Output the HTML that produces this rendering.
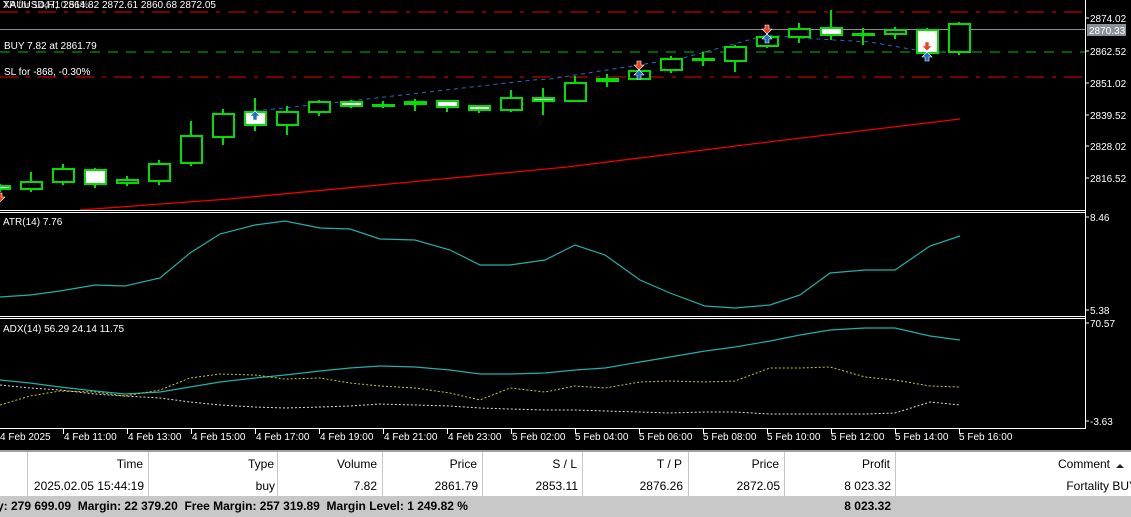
<!DOCTYPE html>
<html><head><meta charset="utf-8"><style>
html,body{margin:0;padding:0;background:#000;width:1131px;height:517px;overflow:hidden;font-family:"Liberation Sans",sans-serif}
svg{position:absolute;left:0;top:0}
.t{position:absolute;font-size:12px;color:#000}
</style></head><body>
<svg width="1131" height="450" viewBox="0 0 1131 450" xmlns="http://www.w3.org/2000/svg" font-family="Liberation Sans, sans-serif" font-size="10">
<rect width="1131" height="450" fill="#000"/>
<line x1="0" y1="12" x2="1085" y2="12" stroke="#e00" stroke-width="1" stroke-dasharray="18,8,4,8"/>
<line x1="0" y1="29.5" x2="1085" y2="29.5" stroke="#8a8f98" stroke-width="1"/>
<line x1="0" y1="52" x2="1085" y2="52" stroke="#00c000" stroke-width="1" stroke-dasharray="10,8"/>
<line x1="0" y1="77" x2="1085" y2="77" stroke="#e00" stroke-width="1" stroke-dasharray="18,8,4,8"/>
<polyline points="80,210 229,199 400,183 567,167 760,143 960,119" fill="none" stroke="#e00" stroke-width="1.3"/>
<polyline points="255,111 350,101 533,80 550,79 683,58 767,35 800,38 870,42 927,52" fill="none" stroke="#1e6fc8" stroke-width="1" stroke-dasharray="4,4"/>
<g stroke="#00e000" stroke-width="2">
<line x1="0" y1="184" x2="0" y2="192"/><rect x="-10" y="186" width="20" height="3" fill="#fff"/>
<line x1="31" y1="172" x2="31" y2="192"/><rect x="21" y="182" width="21" height="7" fill="#000"/>
<line x1="63" y1="164" x2="63" y2="185"/><rect x="53" y="169" width="21" height="13" fill="#000"/>
<line x1="95" y1="168" x2="95" y2="188"/><rect x="85" y="170" width="21" height="14" fill="#fff"/>
<line x1="127" y1="176" x2="127" y2="186"/><rect x="117" y="180" width="21" height="3" fill="#000"/>
<line x1="159" y1="160" x2="159" y2="185"/><rect x="149" y="164" width="21" height="17" fill="#000"/>
<line x1="191" y1="121" x2="191" y2="166"/><rect x="181" y="136" width="21" height="27" fill="#000"/>
<line x1="223" y1="109" x2="223" y2="145"/><rect x="213" y="114" width="21" height="23" fill="#000"/>
<line x1="255" y1="98" x2="255" y2="131"/><rect x="245" y="112" width="21" height="13" fill="#fff"/>
<line x1="287" y1="106" x2="287" y2="135"/><rect x="277" y="112" width="21" height="13" fill="#000"/>
<line x1="319" y1="100" x2="319" y2="116"/><rect x="309" y="102" width="21" height="10" fill="#000"/>
<line x1="351" y1="100" x2="351" y2="108"/><rect x="341" y="102" width="21" height="4" fill="#fff"/>
<line x1="383" y1="101" x2="383" y2="108"/><rect x="373" y="105" width="21" height="1" fill="#0e0"/>
<line x1="415" y1="99" x2="415" y2="111"/><rect x="405" y="102" width="21" height="2" fill="#000"/>
<line x1="447" y1="100" x2="447" y2="112"/><rect x="437" y="101" width="21" height="6" fill="#fff"/>
<line x1="479" y1="105" x2="479" y2="113"/><rect x="469" y="106" width="21" height="4" fill="#fff"/>
<line x1="511" y1="90" x2="511" y2="112"/><rect x="501" y="98" width="21" height="12" fill="#000"/>
<line x1="543" y1="88" x2="543" y2="115"/><rect x="533" y="98" width="21" height="3" fill="#fff"/>
<line x1="575" y1="76" x2="575" y2="102"/><rect x="565" y="83" width="21" height="18" fill="#000"/>
<line x1="607" y1="74" x2="607" y2="87"/><rect x="597" y="79" width="21" height="2" fill="#0e0"/>
<line x1="639" y1="68" x2="639" y2="80"/><rect x="629" y="71" width="21" height="8" fill="#000"/>
<line x1="671" y1="56" x2="671" y2="73"/><rect x="661" y="59" width="21" height="11" fill="#000"/>
<line x1="703" y1="52" x2="703" y2="66"/><rect x="693" y="59" width="21" height="1" fill="#0e0"/>
<line x1="735" y1="45" x2="735" y2="72"/><rect x="725" y="47" width="21" height="14" fill="#000"/>
<line x1="767" y1="33" x2="767" y2="48"/><rect x="757" y="37" width="21" height="9" fill="#000"/>
<line x1="799" y1="23" x2="799" y2="43"/><rect x="789" y="29" width="21" height="8" fill="#000"/>
<line x1="831" y1="10" x2="831" y2="40"/><rect x="821" y="28" width="21" height="7" fill="#fff"/>
<line x1="863" y1="28" x2="863" y2="45"/><rect x="853" y="34" width="21" height="1" fill="#0e0"/>
<line x1="895" y1="27" x2="895" y2="39"/><rect x="885" y="30" width="21" height="4" fill="#000"/>
<line x1="927" y1="28" x2="927" y2="55"/><rect x="917" y="30" width="21" height="23" fill="#fff"/>
<line x1="959" y1="22" x2="959" y2="55"/><rect x="949" y="24" width="21" height="28" fill="#000"/>
</g>
<g fill="#1e6fc8" stroke="#fff" stroke-width="0.6">
<path d="M255 111 l-5 5 h3 v4 h4 v-4 h3z"/>
<path d="M639 70 l-5 5 h3 v4 h4 v-4 h3z"/>
<path d="M767 34 l-5 5 h3 v4 h4 v-4 h3z"/>
<path d="M927 52 l-5 5 h3 v4 h4 v-4 h3z"/>
</g>
<g fill="#f04020" stroke="#fff" stroke-width="0.6">
<path d="M639 70 l-5 -5 h3 v-4 h4 v4 h3z"/>
<path d="M767 34 l-5 -5 h3 v-4 h4 v4 h3z"/>
<path d="M927 51 l-5 -5 h3 v-4 h4 v4 h3z"/>
<path d="M0 202 l-5 -5 h3 v-4 h4 v4 h3z"/>
</g>
<g fill="#fff" font-size="10">
<text x="3" y="8">XAUUSD,H1  2864.82 2872.61 2860.68 2872.05</text>
<text x="3" y="8" opacity="0.7">TP for 1447, 0.51%</text>
<text x="4" y="49">BUY 7.82 at 2861.79</text>
<text x="4" y="75">SL for -868, -0.30%</text>
<text x="3" y="225">ATR(14) 7.76</text>
<text x="3" y="332">ADX(14) 56.29 24.14 11.75</text>
</g>
<line x1="0" y1="210.5" x2="1085" y2="210.5" stroke="#fff"/>
<line x1="0" y1="212.5" x2="1085" y2="212.5" stroke="#fff"/>
<line x1="0" y1="316.5" x2="1085" y2="316.5" stroke="#fff"/>
<line x1="0" y1="318.5" x2="1085" y2="318.5" stroke="#fff"/>
<line x1="0" y1="428.5" x2="1085" y2="428.5" stroke="#fff"/>
<line x1="1085.5" y1="0" x2="1085.5" y2="429" stroke="#fff"/>
<polyline fill="none" stroke="#20b0a8" stroke-width="1.2" points="0,297 30,295 60,291 95,285 125,286 160,278 190,253 220,234 255,225 285,221 320,228 350,229 380,239 415,240 450,250 480,265 510,265 545,260 575,245 605,255 640,280 670,293 705,306 735,308 770,305 800,295 830,273 865,270 895,270 930,246 960,236"/>
<polyline fill="none" stroke="#20b0a8" stroke-width="1.2" points="0,380 30,383 60,387 95,391 125,394 160,392 190,387 220,382 255,378 285,375 320,371 350,368 380,366 415,367 450,370 480,374 510,374 545,373 575,370 605,368 640,362 670,357 705,351 735,347 770,341 800,335 830,330 865,328 895,328 930,336 960,340"/>
<polyline fill="none" stroke="#c8c820" stroke-width="1" stroke-dasharray="2,2" points="0,405 30,396 60,391 95,392 125,396 160,390 190,378 220,374 255,375 285,379 320,378 350,383 380,386 415,388 450,393 480,400 510,388 545,392 575,386 605,388 640,382 670,381 705,382 735,381 770,368 800,368 830,367 865,377 895,380 930,386 960,387"/>
<polyline fill="none" stroke="#ddd" stroke-width="1" stroke-dasharray="2,2" points="0,385 30,388 60,390 95,394 125,396 160,398 190,402 220,405 255,407 285,408 320,407 350,406 380,404 415,405 450,406 480,408 510,409 545,410 575,410 605,411 640,412 670,413 705,412 735,412 770,414 800,414 830,414 865,414 895,413 930,402 960,405"/>
<g fill="#fff" font-size="10">
<g stroke="#fff"><line x1="1085" y1="18" x2="1089" y2="18"/><line x1="1085" y1="51" x2="1089" y2="51"/><line x1="1085" y1="83" x2="1089" y2="83"/><line x1="1085" y1="115" x2="1089" y2="115"/><line x1="1085" y1="146" x2="1089" y2="146"/><line x1="1085" y1="178" x2="1089" y2="178"/><line x1="1085" y1="217" x2="1089" y2="217"/><line x1="1085" y1="310" x2="1089" y2="310"/><line x1="1085" y1="323" x2="1089" y2="323"/><line x1="1085" y1="421" x2="1089" y2="421"/></g>
<text x="1090" y="22">2874.02</text>
<rect x="1087" y="24" width="39" height="12" fill="#8a9098"/>
<text x="1089" y="34">2870.33</text>
<text x="1090" y="55">2862.52</text>
<text x="1090" y="87">2851.02</text>
<text x="1090" y="119">2839.52</text>
<text x="1090" y="150">2828.02</text>
<text x="1090" y="182">2816.52</text>
<text x="1090" y="221">8.46</text>
<text x="1090" y="314">5.38</text>
<text x="1090" y="327">70.57</text>
<text x="1090" y="425">-3.63</text>
</g>
<g fill="#fff" font-size="10" stroke="none">
<text x="0" y="440">4 Feb 2025</text>
<text x="64" y="440">4 Feb 11:00</text>
<text x="128" y="440">4 Feb 13:00</text>
<text x="192" y="440">4 Feb 15:00</text>
<text x="256" y="440">4 Feb 17:00</text>
<text x="320" y="440">4 Feb 19:00</text>
<text x="384" y="440">4 Feb 21:00</text>
<text x="448" y="440">4 Feb 23:00</text>
<text x="512" y="440">5 Feb 02:00</text>
<text x="575" y="440">5 Feb 04:00</text>
<text x="639" y="440">5 Feb 06:00</text>
<text x="703" y="440">5 Feb 08:00</text>
<text x="767" y="440">5 Feb 10:00</text>
<text x="831" y="440">5 Feb 12:00</text>
<text x="895" y="440">5 Feb 14:00</text>
<text x="959" y="440">5 Feb 16:00</text>
</g>
<g stroke="#fff"><line x1="63.5" y1="429" x2="63.5" y2="434"/><line x1="127.5" y1="429" x2="127.5" y2="434"/><line x1="191.5" y1="429" x2="191.5" y2="434"/><line x1="255.5" y1="429" x2="255.5" y2="434"/><line x1="319.5" y1="429" x2="319.5" y2="434"/><line x1="383.5" y1="429" x2="383.5" y2="434"/><line x1="447.5" y1="429" x2="447.5" y2="434"/><line x1="511.5" y1="429" x2="511.5" y2="434"/><line x1="575.5" y1="429" x2="575.5" y2="434"/><line x1="639.5" y1="429" x2="639.5" y2="434"/><line x1="703.5" y1="429" x2="703.5" y2="434"/><line x1="767.5" y1="429" x2="767.5" y2="434"/><line x1="831.5" y1="429" x2="831.5" y2="434"/><line x1="895.5" y1="429" x2="895.5" y2="434"/><line x1="959.5" y1="429" x2="959.5" y2="434"/></g>
</svg>
<div style="position:absolute;left:0;top:450px;width:1131px;height:46px;background:#fff;border-top:2px solid #a0a0a0"></div>
<div style="position:absolute;left:0;top:496px;width:1131px;height:21px;background:#c8c8c8"></div>
<svg width="1131" height="67" style="top:450px" xmlns="http://www.w3.org/2000/svg">
<g stroke="#c8c8c8"><line x1="27.5" y1="2" x2="27.5" y2="46"/><line x1="148.5" y1="2" x2="148.5" y2="46"/><line x1="277.5" y1="2" x2="277.5" y2="46"/><line x1="382.5" y1="2" x2="382.5" y2="46"/><line x1="482.5" y1="2" x2="482.5" y2="46"/><line x1="582.5" y1="2" x2="582.5" y2="46"/><line x1="688.5" y1="2" x2="688.5" y2="46"/><line x1="784.5" y1="2" x2="784.5" y2="46"/><line x1="895.5" y1="2" x2="895.5" y2="46"/></g>
<path d="M1116 18 l4 -4 l4 4z" fill="#222"/>
</svg>
<div class="t" style="left:0;top:457px;width:143px;text-align:right">Time</div>
<div class="t" style="left:150px;top:457px;width:124px;text-align:right">Type</div>
<div class="t" style="left:279px;top:457px;width:98px;text-align:right">Volume</div>
<div class="t" style="left:384px;top:457px;width:93px;text-align:right">Price</div>
<div class="t" style="left:484px;top:457px;width:93px;text-align:right">S / L</div>
<div class="t" style="left:584px;top:457px;width:98px;text-align:right">T / P</div>
<div class="t" style="left:690px;top:457px;width:89px;text-align:right">Price</div>
<div class="t" style="left:786px;top:457px;width:104px;text-align:right">Profit</div>
<div class="t" style="left:897px;top:457px;width:213px;text-align:right">Comment</div>
<div class="t" style="left:0;top:479px;width:144px;text-align:right">2025.02.05 15:44:19</div>
<div class="t" style="left:150px;top:479px;width:125px;text-align:right">buy</div>
<div class="t" style="left:279px;top:479px;width:98px;text-align:right">7.82</div>
<div class="t" style="left:384px;top:479px;width:94px;text-align:right">2861.79</div>
<div class="t" style="left:484px;top:479px;width:94px;text-align:right">2853.11</div>
<div class="t" style="left:584px;top:479px;width:99px;text-align:right">2876.26</div>
<div class="t" style="left:690px;top:479px;width:90px;text-align:right">2872.05</div>
<div class="t" style="left:786px;top:479px;width:105px;text-align:right">8 023.32</div>
<div class="t" style="left:897px;top:479px;width:240px;text-align:right;white-space:nowrap">Fortality BUY</div>
<div class="t" style="left:-3px;top:499px;font-weight:bold;white-space:nowrap">y: 279 699.09&nbsp; Margin: 22 379.20&nbsp; Free Margin: 257 319.89&nbsp; Margin Level: 1 249.82 %</div>
<div class="t" style="left:786px;top:499px;width:105px;text-align:right;font-weight:bold">8 023.32</div>
</body></html>
